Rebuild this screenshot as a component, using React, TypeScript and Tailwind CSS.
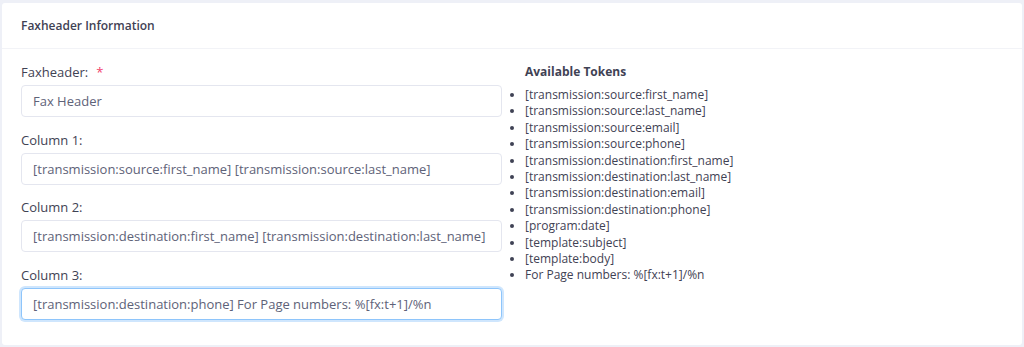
import React from "react"

const tokens = [
  "[transmission:source:first_name]",
  "[transmission:source:last_name]",
  "[transmission:source:email]",
  "[transmission:source:phone]",
  "[transmission:destination:first_name]",
  "[transmission:destination:last_name]",
  "[transmission:destination:email]",
  "[transmission:destination:phone]",
  "[program:date]",
  "[template:subject]",
  "[template:body]",
  "For Page numbers: %[fx:t+1]/%n",
]

function Field({
  label,
  value,
  required,
  focused,
}: {
  label: string
  value: string
  required?: boolean
  focused?: boolean
}) {
  return (
    <div className="mb-[12.6px]">
      <label className="block h-[20px] leading-[20px] mb-[3px] text-[13px] text-[#3f4254]">
        {label}
        {required && <span className="ml-[8px] text-[#f1416c]">*</span>}
      </label>
      <input
        readOnly
        value={value}
        className={
          "block w-full h-[32px] px-[11px] rounded-[4px] bg-white text-[13px] text-[#5e6278] outline-none " +
          (focused
            ? "border border-[#8ec5fb] ring-2 ring-[#cfe6fd]"
            : "border border-[#e4e6ef]")
        }
      />
    </div>
  )
}

export default function App() {
  return (
    <div
      className="min-h-screen bg-[#eef0f7] pt-[3px] pb-[2px] px-[2px]"
      style={{ fontFamily: '"Open Sans", "Noto Sans", sans-serif' }}
    >
      <div className="bg-white rounded-[3px]">
        {/* Header */}
        <div className="h-[46px] flex items-center px-[19px] border-b border-[#f2f3f7]">
          <h3 className="text-[12px] font-semibold text-[#3f4254]">Faxheader Information</h3>
        </div>

        {/* Body */}
        <div className="flex px-[19px] pt-[13px] pb-[13px]">
          <div className="w-[481px]">
            <Field label="Faxheader:" value="Fax Header" required />
            <Field
              label="Column 1:"
              value="[transmission:source:first_name] [transmission:source:last_name]"
            />
            <Field
              label="Column 2:"
              value="[transmission:destination:first_name] [transmission:destination:last_name]"
            />
            <Field
              label="Column 3:"
              value="[transmission:destination:phone] For Page numbers: %[fx:t+1]/%n"
              focused
            />
          </div>

          <div className="ml-[23px]">
            <h4 className="h-[20px] leading-[20px] text-[12px] font-bold text-[#3f4254]">
              Available Tokens
            </h4>
            <ul className="mt-[5px] list-disc pl-0 text-[12px] leading-[16.4px] text-[#3f4254]">
              {tokens.map((t) => (
                <li key={t}>{t}</li>
              ))}
            </ul>
          </div>
        </div>
      </div>
    </div>
  )
}
